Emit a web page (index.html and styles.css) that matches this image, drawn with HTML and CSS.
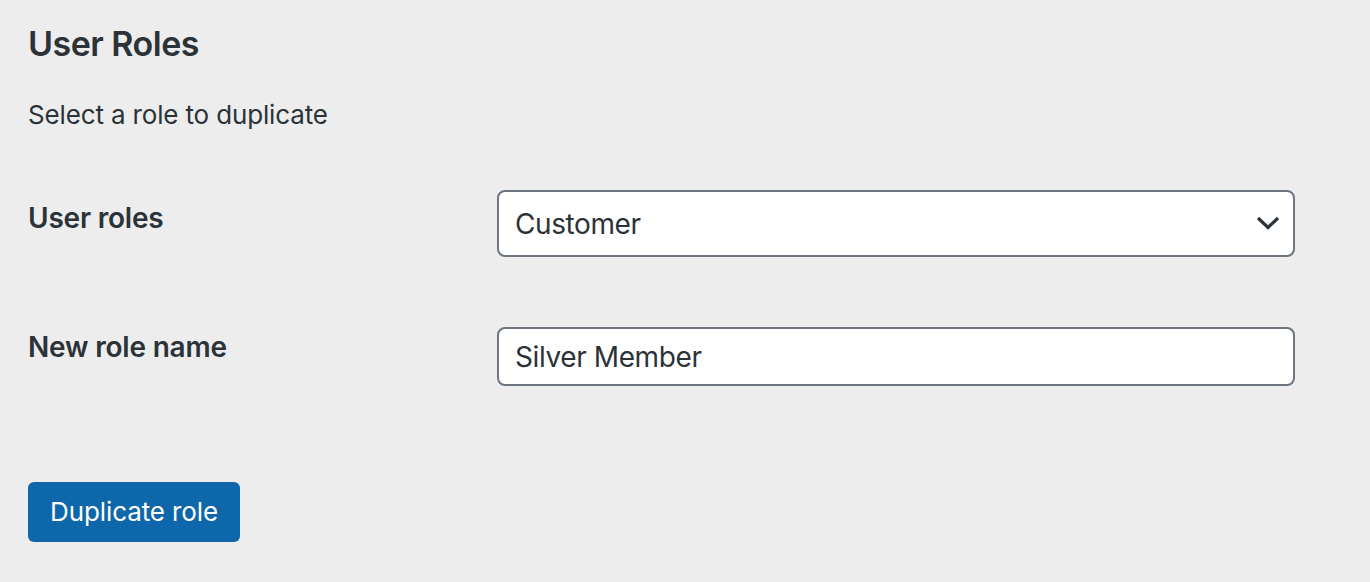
FILE: index.html
```html
<!DOCTYPE html>
<html lang="en">
<head>
<meta charset="utf-8">
<title>User Roles</title>
<link rel="stylesheet" href="styles.css">
</head>
<body>
<div class="wrap">
  <h2 class="title">User Roles</h2>
  <p class="intro">Select a role to duplicate</p>
  <form class="form">
    <div class="row row-select">
      <label class="label" for="role">User roles</label>
      <div class="field">
        <div class="select-wrap">
          <select id="role" class="select">
            <option>Customer</option>
          </select>
          <svg class="chevron" width="24" height="14" viewBox="0 0 24 14" aria-hidden="true">
            <polyline points="2,2 12,11.5 22,2" fill="none" stroke="#2c3338" stroke-width="3.2"/>
          </svg>
        </div>
      </div>
    </div>
    <div class="row row-input">
      <label class="label" for="name">New role name</label>
      <div class="field">
        <input id="name" class="input" type="text" value="Silver Member">
      </div>
    </div>
    <div class="actions">
      <button type="button" class="button">Duplicate role</button>
    </div>
  </form>
</div>
</body>
</html>
```

FILE: styles.css
```css
html, body {
  margin: 0;
  padding: 0;
  background: #ededed;
}

body {
  font-family: Inter, "Noto Sans", "Liberation Sans", sans-serif;
  color: #2c3338;
}

.wrap {
  padding: 22px 0 0 28px;
}

.title {
  margin: 0;
  font-size: 34px;
  line-height: 44px;
  font-weight: 600;
  letter-spacing: -0.5px;
}

.intro {
  margin: 31px 0 0;
  font-size: 26px;
  line-height: 36px;
  font-weight: 400;
  letter-spacing: -0.15px;
}

.form {
  margin: 0;
}

.row {
  display: grid;
  grid-template-columns: 469px 798px;
  align-items: start;
}

.row-select {
  margin-top: 57px;
}

.row-input {
  margin-top: 70px;
}

.label {
  font-size: 28px;
  line-height: 36px;
  font-weight: 600;
  letter-spacing: -0.2px;
}

.row-select .label {
  padding-top: 10px;
}

.row-input .label {
  padding-top: 2px;
}

.select-wrap {
  position: relative;
}

.select {
  display: block;
  width: 100%;
  height: 67px;
  box-sizing: border-box;
  margin: 0;
  padding: 0 50px 0 16px;
  border: 2px solid #6d757e;
  border-radius: 8px;
  background: #fff;
  color: #2c3338;
  font-family: inherit;
  font-size: 28px;
  letter-spacing: -0.4px;
  -webkit-appearance: none;
  appearance: none;
}

.chevron {
  position: absolute;
  right: 15px;
  top: 26px;
  pointer-events: none;
}

.input {
  display: block;
  width: 100%;
  height: 59px;
  box-sizing: border-box;
  margin: 0;
  padding: 0 16px;
  border: 2px solid #6d757e;
  border-radius: 8px;
  background: #fff;
  color: #2c3338;
  font-family: inherit;
  font-size: 28px;
  letter-spacing: -0.4px;
}

.actions {
  margin-top: 96px;
}

.button {
  display: inline-block;
  height: 60px;
  margin: 0;
  padding: 0 22px;
  border: 0;
  border-radius: 6px;
  background: #0e67ab;
  color: #fff;
  font-family: inherit;
  font-size: 26px;
  font-weight: 400;
  line-height: 60px;
  letter-spacing: -0.1px;
  cursor: pointer;
}
```
